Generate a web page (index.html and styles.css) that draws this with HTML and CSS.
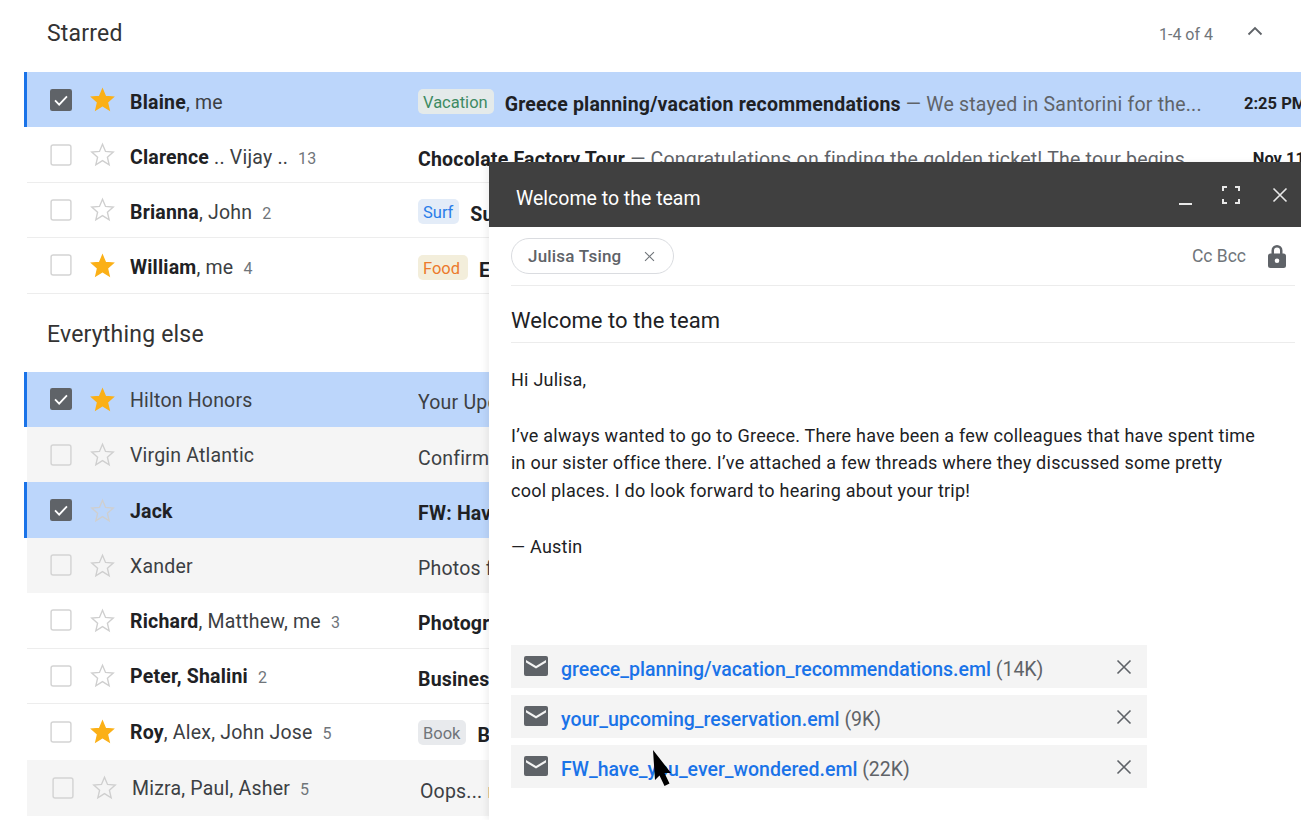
FILE: index.html
```html
<!DOCTYPE html>
<html lang="en">
<head>
<meta charset="utf-8">
<title>Inbox</title>
<link rel="stylesheet" href="styles.css">
</head>
<body>
<svg class="defs" width="0" height="0" aria-hidden="true">
  <symbol id="star" viewBox="0 0 24 24"><path d="M12 2.2l2.9 6.900 7.400.6-5.600 4.900 1.700 7.300L12 17.900l-6.400 4 1.700-7.300-5.600-4.900 7.400-.6z"/></symbol>
  <symbol id="box" viewBox="0 0 24 24"><rect x="1.200" y="1.200" width="21.600" height="21.600" rx="2.200"/></symbol>
  <symbol id="checked" viewBox="0 0 24 24"><rect width="24" height="24" rx="2.500" fill="#5f6368"/><path d="M5.500 12.500l4.500 4.500 8.500-9" fill="none" stroke="#fff" stroke-width="2"/></symbol>
  <symbol id="mail" viewBox="0 0 24 20"><path d="M2 0h20a2 2 0 0 1 2 2v16a2 2 0 0 1-2 2H2a2 2 0 0 1-2-2V2a2 2 0 0 1 2-2zm0 4v2.400l10 6 10-6V4l-10 6z" fill="#5f6368" fill-rule="evenodd"/></symbol>
  <symbol id="x" viewBox="0 0 16 16"><path d="M1.500 1.500l13 13M14.500 1.500l-13 13" fill="none" stroke="currentColor" stroke-width="1.600"/></symbol>
</svg>

<main class="inbox">
  <header class="section section-first">
    <h2 class="section-title">Starred</h2>
    <div class="pager"><span>1-4 of 4</span>
      <svg class="chevron" viewBox="0 0 16 10"><path d="M1.500 8.500L8 2l6.500 6.500" fill="none" stroke="#5f6368" stroke-width="1.800"/></svg>
    </div>
  </header>
  <ul class="rows">
    <li class="row selected">
      <svg class="check"><use href="#checked"/></svg><svg class="star on"><use href="#star"/></svg>
      <div class="sender"><b>Blaine</b>, me</div>
      <div class="content"><span class="tag tag-green">Vacation</span><b>Greece planning/vacation recommendations</b><span class="snippet"> — We stayed in Santorini for the...</span></div>
      <time class="when">2:25 PM</time>
    </li>
    <li class="row ruled">
      <svg class="check off"><use href="#box"/></svg><svg class="star"><use href="#star"/></svg>
      <div class="sender"><b>Clarence</b> .. Vijay .. <span class="count">13</span></div>
      <div class="content"><b>Chocolate Factory Tour</b><span class="snippet"> — Congratulations on finding the golden ticket! The tour begins...</span></div>
      <time class="when">Nov 11</time>
    </li>
    <li class="row ruled">
      <svg class="check off"><use href="#box"/></svg><svg class="star"><use href="#star"/></svg>
      <div class="sender"><b>Brianna</b>, John <span class="count">2</span></div>
      <div class="content"><span class="tag tag-blue">Surf</span><b>Surf</b></div>
    </li>
    <li class="row ruled">
      <svg class="check off"><use href="#box"/></svg><svg class="star on"><use href="#star"/></svg>
      <div class="sender"><b>William</b>, me <span class="count">4</span></div>
      <div class="content"><span class="tag tag-orange">Food</span><b>Eat</b></div>
    </li>
  </ul>

  <header class="section section-second">
    <h2 class="section-title">Everything else</h2>
  </header>
  <ul class="rows rows-else">
    <li class="row selected">
      <svg class="check"><use href="#checked"/></svg><svg class="star on"><use href="#star"/></svg>
      <div class="sender">Hilton Honors</div>
      <div class="content">Your Upcoming</div>
    </li>
    <li class="row read">
      <svg class="check off"><use href="#box"/></svg><svg class="star"><use href="#star"/></svg>
      <div class="sender">Virgin Atlantic</div>
      <div class="content">Confirmation</div>
    </li>
    <li class="row selected">
      <svg class="check"><use href="#checked"/></svg><svg class="star"><use href="#star"/></svg>
      <div class="sender"><b>Jack</b></div>
      <div class="content"><b>FW: Have</b></div>
    </li>
    <li class="row read">
      <svg class="check off"><use href="#box"/></svg><svg class="star"><use href="#star"/></svg>
      <div class="sender">Xander</div>
      <div class="content">Photos from</div>
    </li>
    <li class="row ruled">
      <svg class="check off"><use href="#box"/></svg><svg class="star"><use href="#star"/></svg>
      <div class="sender"><b>Richard</b>, Matthew, me <span class="count">3</span></div>
      <div class="content"><b>Photography</b></div>
    </li>
    <li class="row ruled">
      <svg class="check off"><use href="#box"/></svg><svg class="star"><use href="#star"/></svg>
      <div class="sender"><b>Peter, Shalini</b> <span class="count">2</span></div>
      <div class="content"><b>Business</b></div>
    </li>
    <li class="row">
      <svg class="check off"><use href="#box"/></svg><svg class="star on"><use href="#star"/></svg>
      <div class="sender"><b>Roy</b>, Alex, John Jose <span class="count">5</span></div>
      <div class="content"><span class="tag tag-grey">Book</span><b>Book</b></div>
    </li>
    <li class="row read shifted">
      <svg class="check off"><use href="#box"/></svg><svg class="star"><use href="#star"/></svg>
      <div class="sender">Mizra, Paul, Asher <span class="count">5</span></div>
      <div class="content">Oops... right</div>
    </li>
  </ul>
</main>

<section class="compose">
  <header class="compose-bar">
    <h3 class="compose-title">Welcome to the team</h3>
    <div class="compose-tools">
      <svg class="tool" viewBox="0 0 20 20"><path d="M3 19h13" stroke="#e8e8e8" stroke-width="2"/></svg>
      <svg class="tool" viewBox="0 0 20 20"><path d="M2 6V2h4M14 2h4v4M18 14v4h-4M6 18H2v-4" fill="none" stroke="#e8e8e8" stroke-width="2"/></svg>
      <svg class="tool tool-x"><use href="#x"/></svg>
    </div>
  </header>
  <div class="recipients">
    <span class="chip">Julisa Tsing<svg class="chip-x"><use href="#x"/></svg></span>
    <span class="ccbcc">Cc Bcc</span>
    <svg class="lock" viewBox="0 0 18 23"><path d="M15.500 8.500H14.500V5.500a5.500 5.500 0 0 0-11 0v3H2.500a2.500 2.500 0 0 0-2.500 2.500v9.500A2.500 2.500 0 0 0 2.500 23h13a2.500 2.500 0 0 0 2.500-2.500V11a2.500 2.500 0 0 0-2.500-2.500zM6 5.500a3 3 0 0 1 6 0v3H6zM9 18a2.300 2.300 0 1 1 0-4.600A2.300 2.300 0 0 1 9 18z" fill="#5f6368" fill-rule="evenodd"/></svg>
  </div>
  <div class="subject">Welcome to the team</div>
  <div class="message">
    <p>Hi Julisa,</p>
    <p>I’ve always wanted to go to Greece. There have been a few colleagues that have spent time<br>in our sister office there. I’ve attached a few threads where they discussed some pretty<br>cool places. I do look forward to hearing about your trip!</p>
    <p>— Austin</p>
  </div>
  <ul class="attachments">
    <li class="attachment"><svg class="mail"><use href="#mail"/></svg><span class="file"><a href="#">greece_planning/vacation_recommendations.eml</a> (14K)</span><svg class="att-x"><use href="#x"/></svg></li>
    <li class="attachment"><svg class="mail"><use href="#mail"/></svg><span class="file"><a href="#">your_upcoming_reservation.eml</a> (9K)</span><svg class="att-x"><use href="#x"/></svg></li>
    <li class="attachment"><svg class="mail"><use href="#mail"/></svg><span class="file"><a href="#">FW_have_you_ever_wondered.eml</a> (22K)</span><svg class="att-x"><use href="#x"/></svg></li>
  </ul>
</section>

<svg class="cursor" viewBox="0 0 20 36"><path d="M0 0L18 23H11.500L16.500 33.500 11.500 36 6.500 25.500 2 30z" fill="#000"/></svg>
</body>
</html>
```

FILE: styles.css
```css
* { box-sizing: border-box; }
html, body { margin: 0; height: 820px; overflow: hidden; background: #fff; }
body { font-family: Roboto, "Noto Sans", sans-serif; color: #202124; position: relative; }
.defs { position: absolute; }
ul { list-style: none; margin: 0; padding: 0; }
h2, h3, p { margin: 0; font-weight: 400; }
b { font-weight: 700; }

.inbox { padding-left: 24px; }
.section { display: flex; align-items: center; justify-content: space-between; padding-left: 23px; }
.section-first { height: 72px; padding-bottom: 5px; }
.section-second { height: 78px; padding-top: 5px; }
.section-title { font-size: 23px; line-height: 28px; color: #333; letter-spacing: .2px; }
.pager { display: flex; align-items: center; font-size: 16px; color: #70757a; margin-right: 38px; gap: 34px; padding-top: 1px; }
.chevron { width: 16px; height: 10px; margin-bottom: 6px; }

.row {
  height: 55.400px; display: flex; align-items: center; padding-left: 23px;
  border-left: 3px solid transparent; white-space: nowrap; overflow: hidden;
  font-size: 19.500px; letter-spacing: .2px; color: #3c4043; position: relative;
}
.row.ruled { border-bottom: 1px solid #ededed; border-left-width: 0; margin-left: 3px; }
.selected { background: #bcd6fb; border-left-color: #1a73e8; }
.read { background: #f5f5f5; border-left-width: 0; margin-left: 3px; }
.shifted { padding-left: 25px; margin-top: 1px; }

.check { width: 22px; height: 22px; flex: none; }
.check.off { fill: none; stroke: #d4d4d4; stroke-width: 1.600; }
.star { width: 25px; height: 25px; margin-left: 18px; flex: none; fill: none; stroke: #cfcfcf; stroke-width: 1.300; }
.star.on { fill: #fbb017; stroke: #fbb017; }
.sender { width: 288px; flex: none; margin-left: 15px; padding-top: 5px; color: #3c4043; }
.sender b { color: #202124; }
.count { font-size: 16px; color: #70757a; margin-left: 5px; }
.content { width: 826px; flex: none; overflow: hidden; padding-top: 10px; display: flex; align-items: center; white-space: pre; }
.content b { font-weight: 700; color: #202124; }
.rows-else .sender { padding-top: 2px; }
.rows-else .content { padding-top: 7px; }
.snippet { color: #5f6368; }
.when { width: 61px; flex: none; text-align: right; white-space: nowrap; font-size: 16.500px; letter-spacing: 0; font-weight: 700; color: #202124; padding-top: 8px; }
.tag { font-size: 16.500px; letter-spacing: 0; padding: 2px 6px 0 5px; border-radius: 5px; margin-right: 11px; line-height: 23px; margin-top: -6px; }
.tag-green { background: #e4eaea; color: #3d8a63; }
.tag-blue { background: #e3ecf8; color: #2a7de9; }
.tag-orange { background: #f3eedb; color: #ec7a2c; padding-right: 8px; }
.tag-grey { background: #e8eaed; color: #70757a; }

.compose {
  position: absolute; left: 489px; top: 162px; width: 812px; height: 658px;
  background: #fff; box-shadow: -3px 0 6px rgba(0,0,0,.06); padding: 0 6px 0 22px;
  display: flex; flex-direction: column;
}
.compose-bar {
  height: 65px; margin: 0 -6px 0 -22px; padding: 0 13px 0 27px; background: #404040; color: #fff;
  display: flex; align-items: center; justify-content: space-between;
}
.compose-title { font-size: 19.500px; color: #fff; padding-top: 7px; }
.compose-tools { display: flex; align-items: center; gap: 25px; }
.tool { width: 20px; height: 20px; }
.tool-x { width: 16px; height: 16px; color: #e8e8e8; margin-left: 6px; }
.recipients { height: 59px; display: flex; align-items: center; border-bottom: 1px solid #ececec; }
.chip {
  height: 36px; width: 163px; border: 1px solid #dadce0; border-radius: 18px; display: flex; align-items: center;
  padding-left: 16px; font-size: 17px; letter-spacing: .2px; color: #5f6368; gap: 23px; font-weight: 500;
}
.chip-x { width: 11px; height: 11px; color: #70757a; }
.ccbcc { margin-left: auto; font-size: 17.500px; color: #70757a; }
.lock { width: 18px; height: 23px; margin: 0 9px 0 22px; }
.subject { height: 57px; padding-top: 20px; font-size: 22px; letter-spacing: .05px; line-height: 30px; color: #202124; border-bottom: 1px solid #ececec; }
.message { padding-top: 23px; font-size: 18px; letter-spacing: .24px; line-height: 27.800px; color: #202124; height: 302px; }
.message p { margin-bottom: 27.800px; }
.attachments { width: 636px; display: flex; flex-direction: column; gap: 7px; }
.attachment { height: 43px; background: #f4f4f4; display: flex; align-items: center; padding: 0 15px 0 13px; }
.mail { width: 24px; height: 20px; margin-bottom: 1px; flex: none; }
.file { margin-left: 13px; font-size: 19.500px; color: #5f6368; flex: 1; padding-top: 6px; }
.file a { color: #1a73e8; text-decoration: none; font-weight: 500; }
.att-x { width: 16px; height: 16px; color: #5f6368; flex: none; }

.cursor { position: absolute; left: 653px; top: 750px; width: 20px; height: 36px; }
```
